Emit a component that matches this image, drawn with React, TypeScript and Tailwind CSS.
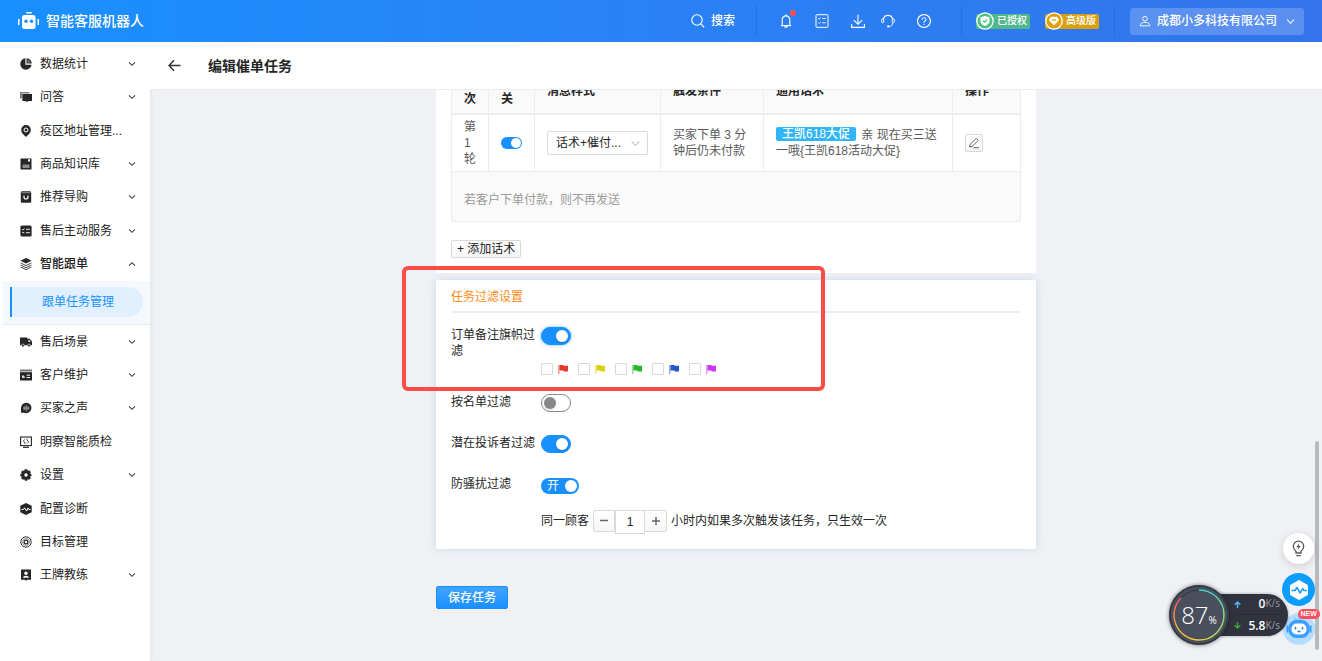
import React from "react";
import { AiOutlineBell, AiOutlineQuestionCircle } from "react-icons/ai";

function Svg({ children, className = "size-3", box = 12 }: { children: React.ReactNode; className?: string; box?: number }) {
  return (
    <svg viewBox={`0 0 ${box} ${box}`} className={`shrink-0 ${className}`} fill="none" aria-hidden="true">
      {children}
    </svg>
  );
}

const icons: Record<string, React.ReactNode> = {
  stats: (
    <>
      <path d="M5.4.3a5.7 5.7 0 1 0 6.2 6.4H5.4z" fill="#262626" />
      <path d="M6.5.2a5.6 5.6 0 0 1 5.3 5.4H6.5z" fill="#262626" />
      <path d="M7.4 1.4a4.4 4.4 0 0 1 3.2 3.3H7.4z" fill="#777" />
    </>
  ),
  chat: (
    <>
      <path d="M0 1h9.4v1.5H2v5H0z" fill="#808080" />
      <path d="M2.4 3H12v7H8.2L7 11.2 5.8 10H2.4z" fill="#262626" />
    </>
  ),
  pin: (
    <>
      <path d="M6 0a4.8 4.8 0 0 1 4.8 4.9C10.800 8 7.800 10 6 12 4.200 10 1.200 8 1.200 4.900A4.800 4.800 0 0 1 6 0z" fill="#262626" />
      <circle cx="6" cy="5" r="2" stroke="#fff" strokeWidth="1" />
    </>
  ),
  store: (
    <>
      <path d="M.5.5h11v11H.5z" fill="#262626" />
      <path d="M2.500 6.500h7v3.500h-7z" fill="#8c8c8c" />
      <path d="M8 1.200h2v2.300H8z" fill="#fff" />
    </>
  ),
  bag: (
    <>
      <path d="M1.500 .3h9l.7 2v8.700l-.7.700h-9l-.7-.7V2.300z" fill="#262626" />
      <path d="M2 1.200h8l.3 1H1.700z" fill="#999" />
      <path d="M4 4.500v1.500a2 2 0 0 0 4 0V4.500" stroke="#fff" strokeWidth="1.200" />
    </>
  ),
  list: (
    <>
      <rect x=".4" y=".4" width="11.200" height="11.200" rx="1.500" fill="#262626" />
      <path d="M2.300 4.300l.8.800 1.300-1.500M2.300 7.600h2M6 4.300h3.800M6 7.700h3.800" stroke="#fff" strokeWidth=".9" />
    </>
  ),
  layers: (
    <>
      <path d="M6 0l5.500 2.700L6 5.600.5 2.700z" fill="#262626" />
      <path d="M.6 4.900L6 7.600l5.400-2.700M.6 7L6 9.700 11.400 7M.6 9L6 11.600 11.400 9" stroke="#333" strokeWidth=".9" />
    </>
  ),
  truck: (
    <>
      <path d="M0 1.500h7.300v1.300h2.500L12 5.600v3.700H0z" fill="#262626" />
      <path d="M8.500 4h1l1.200 1.700H8.500z" fill="#fff" />
      <circle cx="2.900" cy="9.500" r="1.400" fill="#262626" stroke="#fff" strokeWidth=".6" />
      <circle cx="9" cy="9.500" r="1.400" fill="#262626" stroke="#fff" strokeWidth=".6" />
    </>
  ),
  card: (
    <>
      <path d="M0 .5h12v2H0z" fill="#777" />
      <path d="M0 3.200h12v8.300H0z" fill="#262626" />
      <path d="M2 7.500a1.500 1.500 0 0 0 3 0H3.500V6A1.500 1.500 0 0 0 2 7.500z" fill="#fff" />
      <path d="M6.600 6.200h3.400M6.600 8.500h3.400" stroke="#fff" strokeWidth="1" />
    </>
  ),
  voice: (
    <>
      <path d="M6.200.7a5.200 5.200 0 1 1-2 10H1V6A5.200 5.200 0 0 1 6.200.7z" fill="#262626" />
      <path d="M6.200 3v6.200M4.200 4.200V8M8.200 4.200V8M3 6.100h6.400" stroke="#999" strokeWidth="1.100" />
    </>
  ),
  monitor: (
    <>
      <rect x=".6" y="1" width="10.800" height="8.600" stroke="#262626" strokeWidth="1.100" />
      <path d="M3 11.300h6" stroke="#262626" strokeWidth="1.200" />
      <path d="M4.800 3.500L3.300 4.900l2 2.200-1 .6M7.200 7.300l1.500-1.500-2-2.200 1-.6" stroke="#333" strokeWidth=".9" />
    </>
  ),
  gear: (
    <>
      <path d="M4.700.3h2.600l.5 1.500 2-.4 1.100 2-.9 1.300 1.500.6v1.600l-1.500.7.700 1.600-1.500 1.600-1.600-.6-.5 1.500H5l-.7-1.500-1.600.6L1.100 9l.7-1.500L.3 7V5l1.500-.5-.7-1.600 1.500-1.500 1.500.500z" fill="#262626" />
      <circle cx="6" cy="6" r="1.700" fill="#fff" />
    </>
  ),
  diag: (
    <>
      <path d="M6 0l5.700 2.700v6.600L6 12 .3 9.300V2.700z" fill="#262626" />
      <path d="M1.500 6.500h1.800L4.600 4.800l2 3.200L8 5l.9 1.500h1.600" stroke="#fff" strokeWidth="1" />
    </>
  ),
  target: (
    <>
      <circle cx="6" cy="6" r="5.200" stroke="#333" strokeWidth="1" />
      <circle cx="6" cy="6" r="3.500" stroke="#666" strokeWidth=".7" />
      <circle cx="6" cy="6" r="1.900" stroke="#262626" strokeWidth="1.200" />
    </>
  ),
  coach: (
    <>
      <path d="M1 .5h10v10.300H7L6 12l-1-1.200H1z" fill="#262626" />
      <circle cx="6" cy="4.200" r="1.700" fill="#fff" />
      <path d="M3 8.700c0-2.700 6-2.700 6 0z" fill="#fff" />
    </>
  ),
};

type Item = { icon: string; label: string; arrow?: boolean; open?: boolean };

const before: Item[] = [
  { icon: "stats", label: "数据统计", arrow: true },
  { icon: "chat", label: "问答", arrow: true },
  { icon: "pin", label: "疫区地址管理..." },
  { icon: "store", label: "商品知识库", arrow: true },
  { icon: "bag", label: "推荐导购", arrow: true },
  { icon: "list", label: "售后主动服务", arrow: true },
  { icon: "layers", label: "智能跟单", arrow: true, open: true },
];
const after: Item[] = [
  { icon: "truck", label: "售后场景", arrow: true },
  { icon: "card", label: "客户维护", arrow: true },
  { icon: "voice", label: "买家之声", arrow: true },
  { icon: "monitor", label: "明察智能质检" },
  { icon: "gear", label: "设置", arrow: true },
  { icon: "diag", label: "配置诊断" },
  { icon: "target", label: "目标管理" },
  { icon: "coach", label: "王牌教练", arrow: true },
];

function NavItem({ item }: { item: Item }) {
  return (
    <button type="button" aria-expanded={item.arrow ? !!item.open : undefined} className="flex w-full items-center gap-2 pr-[14px] pl-5 text-left">
      <Svg>{icons[item.icon]}</Svg>
      <span className={item.open ? "flex-1 font-medium whitespace-nowrap" : "flex-1 whitespace-nowrap"}>{item.label}</span>
      {item.arrow && (
        <Svg className="size-2" box={8}>
          <path d={item.open ? "M1 5.700L4 2.700l3 3" : "M1 2.300l3 3 3-3"} stroke="#444" strokeWidth="1.100" />
        </Svg>
      )}
    </button>
  );
}

function Sidebar() {
  return (
    <nav className="z-10 w-[150px] shrink-0 bg-white pt-[5px] text-xs text-[#222] shadow-[0_0_5px_rgba(0,0,0,0.08)]">
      <div className="grid h-[234px] auto-rows-fr">
        {before.map((i) => <NavItem key={i.label} item={i} />)}
      </div>
      <div className="ml-0.5 border-b border-[#e3edf7] bg-[#f5f9fd] pt-[6px] pr-[7px] pb-[7px] pl-2">
        <a href="#tasks" className="flex h-[30px] items-center rounded-r-full border-l-2 border-[#1890ff] bg-[#e1f0ff] pl-[30px] text-[#1890ff]">
          跟单任务管理
        </a>
      </div>
      <div className="grid h-[267px] auto-rows-fr">
        {after.map((i) => <NavItem key={i.label} item={i} />)}
      </div>
    </nav>
  );
}

function Divider() {
  return <span className="h-[30px] w-px bg-[#2170e2]" />;
}

function Header() {
  return (
    <header className="z-20 flex h-[42px] shrink-0 items-center bg-linear-to-r from-[#1890ff] to-[#3373ec] pr-[18px] pl-[18px] text-xs text-white">
      <svg viewBox="0 0 21 18" className="h-[18px] w-[21px]" fill="none" aria-hidden="true">
        <rect x="8" y="0" width="6" height="1.600" rx=".8" fill="#fff" />
        <rect x="4" y="3" width="13.500" height="14" rx="2.500" fill="#fff" />
        <path d="M.8 7.500v5M20.200 7.500v5" stroke="#fff" strokeWidth="1.500" strokeLinecap="round" />
        <circle cx="8" cy="9.200" r="1.700" fill="#1890ff" />
        <circle cx="13.500" cy="9.200" r="1.700" fill="#1890ff" />
      </svg>
      <h1 className="ml-[7px] flex-1 text-sm font-medium">智能客服机器人</h1>
      <button type="button" className="mr-[21px] flex items-center gap-[6px] font-medium">
        <Svg className="size-[14px]" box={14}>
          <circle cx="6" cy="6" r="5.200" stroke="#fff" strokeWidth="1.100" />
          <path d="M9.800 9.800l3.400 3.500" stroke="#fff" strokeWidth="1.200" />
        </Svg>
        搜索
      </button>
      <Divider />
      <button type="button" aria-label="消息" className="relative ml-[21px]">
        <AiOutlineBell className="size-4" />
        <span className="absolute -top-[3px] -right-0.5 size-[6px] rounded-full bg-[#ff4d4f]" />
      </button>
      <button type="button" aria-label="清单" className="ml-[21px]">
        <Svg className="size-[14px]" box={14}>
          <rect x="1" y=".7" width="12" height="12.600" rx=".8" stroke="#fff" strokeWidth="1" />
          <path d="M3.300 4.300l.9.900 1.400-1.600M3.300 8.600l.9.900L5.600 8M7.200 4.500h3.500M7.200 8.800h3.500" stroke="#fff" strokeWidth=".9" />
        </Svg>
      </button>
      <button type="button" aria-label="下载" className="ml-[22px]">
        <Svg className="size-[14px]" box={14}>
          <path d="M7 .5v9.500M2.800 6.200L7 10.200l4.200-4M.6 10v3.400h12.800V10" stroke="#fff" strokeWidth="1.100" />
        </Svg>
      </button>
      <button type="button" aria-label="客服" className="ml-4">
        <Svg className="size-[14px]" box={14}>
          <path d="M2.500 5A4.600 4.600 0 0 1 11.500 5" stroke="#fff" strokeWidth="1.200" />
          <rect x=".7" y="4.700" width="2" height="4" rx="1" stroke="#fff" strokeWidth="1" />
          <rect x="11.300" y="4.700" width="2" height="4" rx="1" stroke="#fff" strokeWidth="1" />
          <path d="M11.800 9c-.3 2.300-1.800 3.400-3.700 3.500" stroke="#fff" strokeWidth="1" />
          <circle cx="7.200" cy="12.400" r="1.100" fill="#fff" />
        </Svg>
      </button>
      <button type="button" aria-label="帮助" className="ml-[21px]">
        <AiOutlineQuestionCircle className="size-4" />
      </button>
      <span className="w-[29px]" />
      <Divider />
      <span className="ml-[14px] flex h-[15px] w-[54px] items-center rounded-xs bg-[#51b88b] text-[10px] font-medium">
        <Svg className="mr-[3px] size-[18px]" box={18}>
          <circle cx="9" cy="9" r="8.200" fill="#51c182" stroke="#fff" strokeWidth="1.300" />
          <path d="M9 4l4.500 1.300v4.200c0 2-2.500 3.700-4.500 4.500-2-.8-4.500-2.500-4.500-4.500V5.300z" fill="#fff" />
          <path d="M7 8.500l1.700 1.700 2.600-2.600" stroke="#51b88b" strokeWidth="1.300" />
        </Svg>
        已授权
      </span>
      <span className="ml-[15px] flex h-[15px] w-[54px] items-center rounded-xs bg-[#d89f0e] text-[10px] font-medium">
        <Svg className="mr-[3px] size-[18px]" box={18}>
          <circle cx="9" cy="9" r="8.200" fill="#dfa000" stroke="#fff" strokeWidth="1.300" />
          <path d="M6 4.700h6l2.200 3.300L9 13.500 3.800 8z" fill="#fff" />
          <path d="M7 8h4" stroke="#d89f0e" strokeWidth="1.300" />
        </Svg>
        高级版
      </span>
      <span className="w-[15px]" />
      <Divider />
      <button type="button" className="ml-[15px] flex h-[27px] w-[174px] items-center rounded-[3px] bg-white/20 px-[9px] font-medium">
        <Svg className="mr-[6px] size-3">
          <circle cx="6" cy="3.700" r="2.300" stroke="#fff" strokeWidth=".9" />
          <path d="M1.200 10.800c0-2 1.500-3.300 3.300-3.300h3c1.800 0 3.300 1.300 3.300 3.300z" stroke="#fff" strokeWidth=".9" />
        </Svg>
        <span className="flex-1 text-left whitespace-nowrap">成都小多科技有限公司</span>
        <Svg className="size-[9px]" box={9}>
          <path d="M1 2.500l3.500 3.800L8 2.500" stroke="#fff" strokeWidth="1.100" />
        </Svg>
      </button>
    </header>
  );
}

function Toggle({ id, on, glow }: { id: string; on: boolean; glow?: boolean }) {
  return (
    <input
      id={id}
      type="checkbox"
      role="switch"
      defaultChecked={on}
      className={`relative block h-[18px] w-[30px] appearance-none rounded-full border border-[#888] bg-white before:absolute before:top-0.5 before:left-0.5 before:size-3 before:rounded-full before:bg-[#888] before:shadow-sm checked:border-[#1890ff] checked:bg-[#1890ff] checked:before:right-0.5 checked:before:left-auto checked:before:bg-white ${glow ? "shadow-[0_0_3px_1px_rgba(24,144,255,0.35)]" : ""}`}
    />
  );
}

const th = "border-r border-b-2 border-[#ededed] bg-[#fafafa] px-3 pt-2 pb-[6px] text-left font-bold text-[#262626]";
const td = "border-r border-b border-[#ededed] px-3 py-1 text-left";

function RoundsCard() {
  return (
    <section className="-mt-[23px] bg-white px-[15px] pb-[15px]">
      <table className="w-full table-fixed border-separate border-spacing-0 border-l border-[#ededed] text-xs leading-4 text-[#595959]">
        <colgroup>
          <col className="w-[37px]" />
          <col className="w-[46px]" />
          <col className="w-[126px]" />
          <col className="w-[103px]" />
          <col className="w-[189px]" />
          <col />
        </colgroup>
        <thead>
          <tr>
            <th className={th}>轮次</th>
            <th className={th}>开关</th>
            <th className={th}>消息样式</th>
            <th className={th}>触发条件</th>
            <th className={th}>通用话术</th>
            <th className={th}>操作</th>
          </tr>
        </thead>
        <tbody>
          <tr>
            <td className={td}>第1轮</td>
            <td className={td}>
              <input
                type="checkbox"
                role="switch"
                aria-label="第1轮开关"
                defaultChecked
                className="relative block h-3 w-[21px] appearance-none rounded-full bg-[#bbb] before:absolute before:top-px before:left-px before:size-[10px] before:rounded-full before:bg-white checked:bg-[#1890ff] checked:before:right-px checked:before:left-auto"
              />
            </td>
            <td className={td}>
              <div className="relative w-[101px]">
                <select aria-label="消息样式" className="block h-6 w-full appearance-none rounded-xs border border-[#d9d9d9] bg-white pl-2 text-xs text-[#262626]">
                  <option>话术+催付...</option>
                </select>
                <Svg className="pointer-events-none absolute top-2 right-2 size-[9px]" box={9}>
                  <path d="M.7 2.300l3.800 4 3.800-4" stroke="#bfbfbf" strokeWidth="1.100" />
                </Svg>
              </div>
            </td>
            <td className={td}>买家下单 3 分钟后仍未付款</td>
            <td className={td}>
              <span className="mr-0.5 inline-block h-[14px] rounded-xs bg-[#30b6f8] px-[6px] align-top leading-[14px] font-medium text-white">王凯618大促</span>
              {" 亲 现在买三送一哦{王凯618活动大促}"}
            </td>
            <td className={td}>
              <button type="button" aria-label="编辑" className="flex size-[18px] items-center justify-center rounded-xs border border-[#d9d9d9] bg-linear-to-b from-white to-[#f5f5f5] text-[#777]">
                <Svg>
                  <path d="M1.500 10l.6-2.600L8.300 1.300l2 2L4 9.500z" stroke="#666" strokeWidth="1" strokeLinejoin="round" />
                  <path d="M5.500 10.700h5.500" stroke="#666" strokeWidth="1" />
                </Svg>
              </button>
            </td>
          </tr>
        </tbody>
      </table>
      <p className="flex h-[50px] items-center rounded-b-xs border border-t-0 border-[#ededed] bg-[#fafafa] px-3 pt-[6px] text-xs text-[#999]">若客户下单付款，则不再发送</p>
      <button type="button" className="mt-[18px] flex h-[18px] items-center rounded-xs border border-[#d9d9d9] bg-linear-to-b from-white to-[#f7f7f7] px-[5px] text-xs text-[#222]">
        + 添加话术
      </button>
    </section>
  );
}

const flags = [
  { name: "红旗", fill: "#e6392b" },
  { name: "黄旗", fill: "#d9d20a" },
  { name: "绿旗", fill: "#25b827" },
  { name: "蓝旗", fill: "#2855c8" },
  { name: "紫旗", fill: "#cb37ee" },
];

const stepBtn = "flex h-[22px] w-[22px] items-center justify-center border border-[#d9d9d9] bg-linear-to-b from-white to-[#f5f5f5] text-[#666]";

function FilterCard() {
  return (
    <section className="mt-[7px] rounded-xs bg-white px-[15px] pb-[15px] text-xs leading-4 text-[#262626] shadow-[0_0_8px_rgba(60,110,170,0.2)]">
      <h3 className="border-b-2 border-[#ededed] pt-[9px] pb-[6px] text-[#fa8c16]">任务过滤设置</h3>
      <div className="mt-[14px] grid grid-cols-[84px_1fr] gap-x-[6px]">
        <label htmlFor="flag-filter" className="pb-[35px]">订单备注旗帜过滤</label>
        <div>
          <Toggle id="flag-filter" on glow />
          <div className="mt-[18px] flex gap-[9px]">
            {flags.map((f) => (
              <label key={f.name} className="flex items-center gap-[5px]">
                <input type="checkbox" aria-label={f.name} className="size-3 appearance-none rounded-[1px] border border-[#d9d9d9] bg-white checked:bg-[#1890ff]" />
                <svg viewBox="0 0 11 10" className="h-[10px] w-[11px]" aria-hidden="true">
                  <path d="M0 1h1.500v9H0z" fill={f.fill} opacity=".5" />
                  <path d="M1.500 1h4v.8H10v5.700H5.500v-1h-4z" fill={f.fill} />
                </svg>
              </label>
            ))}
          </div>
        </div>
      </div>
      <div className="grid grid-cols-[84px_1fr] gap-x-[6px] pb-[25px]">
        <label htmlFor="list-filter">按名单过滤</label>
        <div className="h-4"><Toggle id="list-filter" on={false} /></div>
      </div>
      <div className="grid grid-cols-[84px_1fr] gap-x-[6px] pb-[25px]">
        <label htmlFor="complaint-filter" className="whitespace-nowrap">潜在投诉者过滤</label>
        <div className="h-4"><Toggle id="complaint-filter" on /></div>
      </div>
      <div className="grid grid-cols-[84px_1fr] gap-x-[6px]">
        <label htmlFor="disturb-filter">防骚扰过滤</label>
        <div>
          <label className="mt-0.5 flex h-4 w-[38px] items-center justify-between rounded-full bg-[#1890ff] pr-0.5 pl-[6px] text-white">
            <input id="disturb-filter" type="checkbox" role="switch" defaultChecked className="sr-only" />
            开
            <span className="size-3 rounded-full bg-white" />
          </label>
          <div className="mt-4 flex h-6 items-start">
            <label htmlFor="hours" className="mr-1 leading-[22px]">同一顾客</label>
            <button type="button" aria-label="减少" className={`${stepBtn} rounded-l-xs`}>
              <Svg className="size-2" box={8}><path d="M0 3.500h8" stroke="currentColor" strokeWidth="1.500" /></Svg>
            </button>
            <input id="hours" type="text" defaultValue="1" className="h-6 w-[30px] border border-[#d9d9d9] bg-white text-center text-xs" />
            <button type="button" aria-label="增加" className={`${stepBtn} rounded-r-xs border-l-0`}>
              <Svg className="size-2" box={8}><path d="M0 4h8M4 0v8" stroke="currentColor" strokeWidth="1.500" /></Svg>
            </button>
            <span className="ml-1 leading-[22px]">小时内如果多次触发该任务，只生效一次</span>
          </div>
        </div>
      </div>
      <div
        aria-hidden="true"
        className="pointer-events-none absolute top-[176px] left-1/2 h-[125px] w-[423px] -translate-x-[334px] rounded-md border-4 border-[#fa4d48]"
      />
    </section>
  );
}

function SpeedWidget() {
  return (
    <div className="absolute right-[34px] bottom-4 flex items-center font-[Open_Sans,Noto_Sans_CJK_SC,sans-serif]">
      <div className="z-10 grid size-[60px] place-items-center rounded-full bg-[#4a4f5d] shadow-[0_0_4px_rgba(0,0,0,0.5)]">
        <svg viewBox="0 0 60 60" className="col-start-1 row-start-1 size-[60px]" fill="none" aria-hidden="true">
          <defs>
            <linearGradient id="r1" x1="0" y1="0" x2="0" y2="1"><stop stopColor="#3fd5d0" /><stop offset="1" stopColor="#8edc7a" /></linearGradient>
            <linearGradient id="r2" x1="1" y1="0" x2="0" y2="0"><stop stopColor="#8edc7a" /><stop offset="1" stopColor="#efd23c" /></linearGradient>
            <linearGradient id="r3" x1="0" y1="1" x2="0" y2="0"><stop stopColor="#efd23c" /><stop offset=".6" stopColor="#f69045" /><stop offset="1" stopColor="#ee5366" /></linearGradient>
          </defs>
          <circle cx="30" cy="30" r="29" stroke="#343843" strokeWidth="1.500" />
          <circle cx="30" cy="30" r="25" stroke="#3c414e" strokeWidth="2" />
          <path d="M30 5a25 25 0 0 1 25 25" stroke="url(#r1)" strokeWidth="1.500" />
          <path d="M55 30a25 25 0 0 1-25 25" stroke="url(#r2)" strokeWidth="1.500" />
          <path d="M30 55A25 25 0 0 1 12 12.700" stroke="url(#r3)" strokeWidth="1.500" />
        </svg>
        <span className="col-start-1 row-start-1 flex items-baseline text-2xl leading-none font-light text-white">
          87<small className="text-[10px] font-normal">%</small>
        </span>
      </div>
      <div className="-ml-4 grid h-[42px] w-[75px] grid-rows-2 rounded-r-full bg-[#31343f] pr-2 pl-[21px] text-xs text-white shadow-[0_0_3px_rgba(0,0,0,0.4)]">
        <div className="flex items-center border-b border-[#282b34]">
          <Svg className="size-[7px]" box={7}><path d="M3.500 7V1M.7 3.700L3.500 1l2.800 2.700" stroke="#4db9ff" strokeWidth="1.400" /></Svg>
          <span className="ml-auto font-semibold">0</span><span className="text-[10px] text-[#9a9ca5]">K/s</span>
        </div>
        <div className="flex items-center">
          <Svg className="size-[7px]" box={7}><path d="M3.500 0v6M.7 3.300L3.500 6l2.800-2.700" stroke="#2fae3d" strokeWidth="1.400" /></Svg>
          <span className="ml-auto font-semibold">5.8</span><span className="text-[10px] text-[#9a9ca5]">K/s</span>
        </div>
      </div>
    </div>
  );
}

function FloatingTools() {
  return (
    <>
      <div className="absolute right-[3px] bottom-[11px] h-[209px] w-1 rounded-full bg-[#b9babf]" />
      <div className="absolute right-[7px] bottom-4 flex flex-col items-center">
        <button type="button" aria-label="提示" className="grid size-[31px] place-items-center rounded-full bg-white shadow-[0_2px_8px_rgba(0,0,0,0.15)]">
          <Svg className="size-[17px]" box={17}>
            <path d="M6 13v-1.800C4.300 10 3.300 8.500 3.300 6.300a5.200 5.200 0 0 1 10.400 0c0 2.200-1 3.700-2.700 4.900V13zM6.300 15.700h4.400" stroke="#555" strokeWidth="1.300" />
            <path d="M9.300 3.200L6.300 7.200h2.200L7.700 10l3-4H8.800z" fill="#555" />
          </Svg>
        </button>
        <button type="button" aria-label="诊断" className="mt-[9px] grid size-[33px] place-items-center rounded-full bg-[#0c9dff]">
          <Svg className="size-[22px]" box={22}>
            <path d="M10 1.400q1-.6 2 0l7 4q1 .6 1 1.800v7.600q0 1.200-1 1.800l-7 4q-1 .6-2 0l-7-4q-1-.6-1-1.800V7.200Q2 6 3 5.400z" fill="#fff" />
            <path d="M3.500 11.500H7l2-3 3.200 5.500 2.500-4.500 1 2h3" stroke="#0c9dff" strokeWidth="1.500" strokeLinejoin="round" />
          </Svg>
        </button>
        <button type="button" aria-label="智能助手" className="relative mt-[7px] grid size-8 place-items-center rounded-full bg-[#b3deff]">
          <Svg className="size-8" box={32}>
            <path d="M12 4v4l2-2M19 7l-3-3v4" stroke="#8cc6f5" strokeWidth="1.500" />
            <rect x="5.500" y="7" width="21" height="18" rx="8" fill="#3b9dff" />
            <path d="M4.500 12.500v7M27.500 12.500v7" stroke="#3b9dff" strokeWidth="2" />
            <rect x="8.500" y="10.500" width="15" height="11" rx="5" fill="#fff" />
            <path d="M12.500 14v2.500M19.500 14v2.500M14.500 18.500h3" stroke="#267bd8" strokeWidth="1.500" />
          </Svg>
          <span className="absolute -top-1 left-[15px] h-[10px] rounded-full bg-[#ff4d5a] px-[3px] text-[7px] leading-[10px] font-bold text-white">NEW</span>
        </button>
      </div>
      <SpeedWidget />
    </>
  );
}

export default function App() {
  return (
    <div className="relative flex h-screen flex-col overflow-hidden bg-[#f0f1f5] font-[Liberation_Sans,Noto_Sans_CJK_SC,sans-serif]">
      <Header />
      <div className="flex min-h-0 flex-1">
        <Sidebar />
        <main className="flex min-w-0 flex-1 flex-col">
          <div className="z-10 flex h-12 shrink-0 items-center gap-[27px] border-b border-[#ebecef] bg-white pl-[18px] text-[#262626]">
            <button type="button" aria-label="返回">
              <Svg className="size-[13px]" box={13}>
                <path d="M12.500 6.500H1M6 1.300L1 6.500l5 5.200" stroke="#333" strokeWidth="1.400" />
              </Svg>
            </button>
            <h2 className="text-sm font-bold">编辑催单任务</h2>
          </div>
          <div className="relative min-h-0 flex-1 overflow-hidden">
            <div className="mx-auto w-full max-w-[600px]">
              <RoundsCard />
              <FilterCard />
              <button type="button" className="mt-[37px] h-[23px] rounded-xs border border-[#1890ff] bg-linear-to-b from-[#40a4ff] to-[#1890ff] px-[11px] text-xs font-medium text-white">
                保存任务
              </button>
            </div>
          </div>
        </main>
      </div>
      <FloatingTools />
    </div>
  );
}
